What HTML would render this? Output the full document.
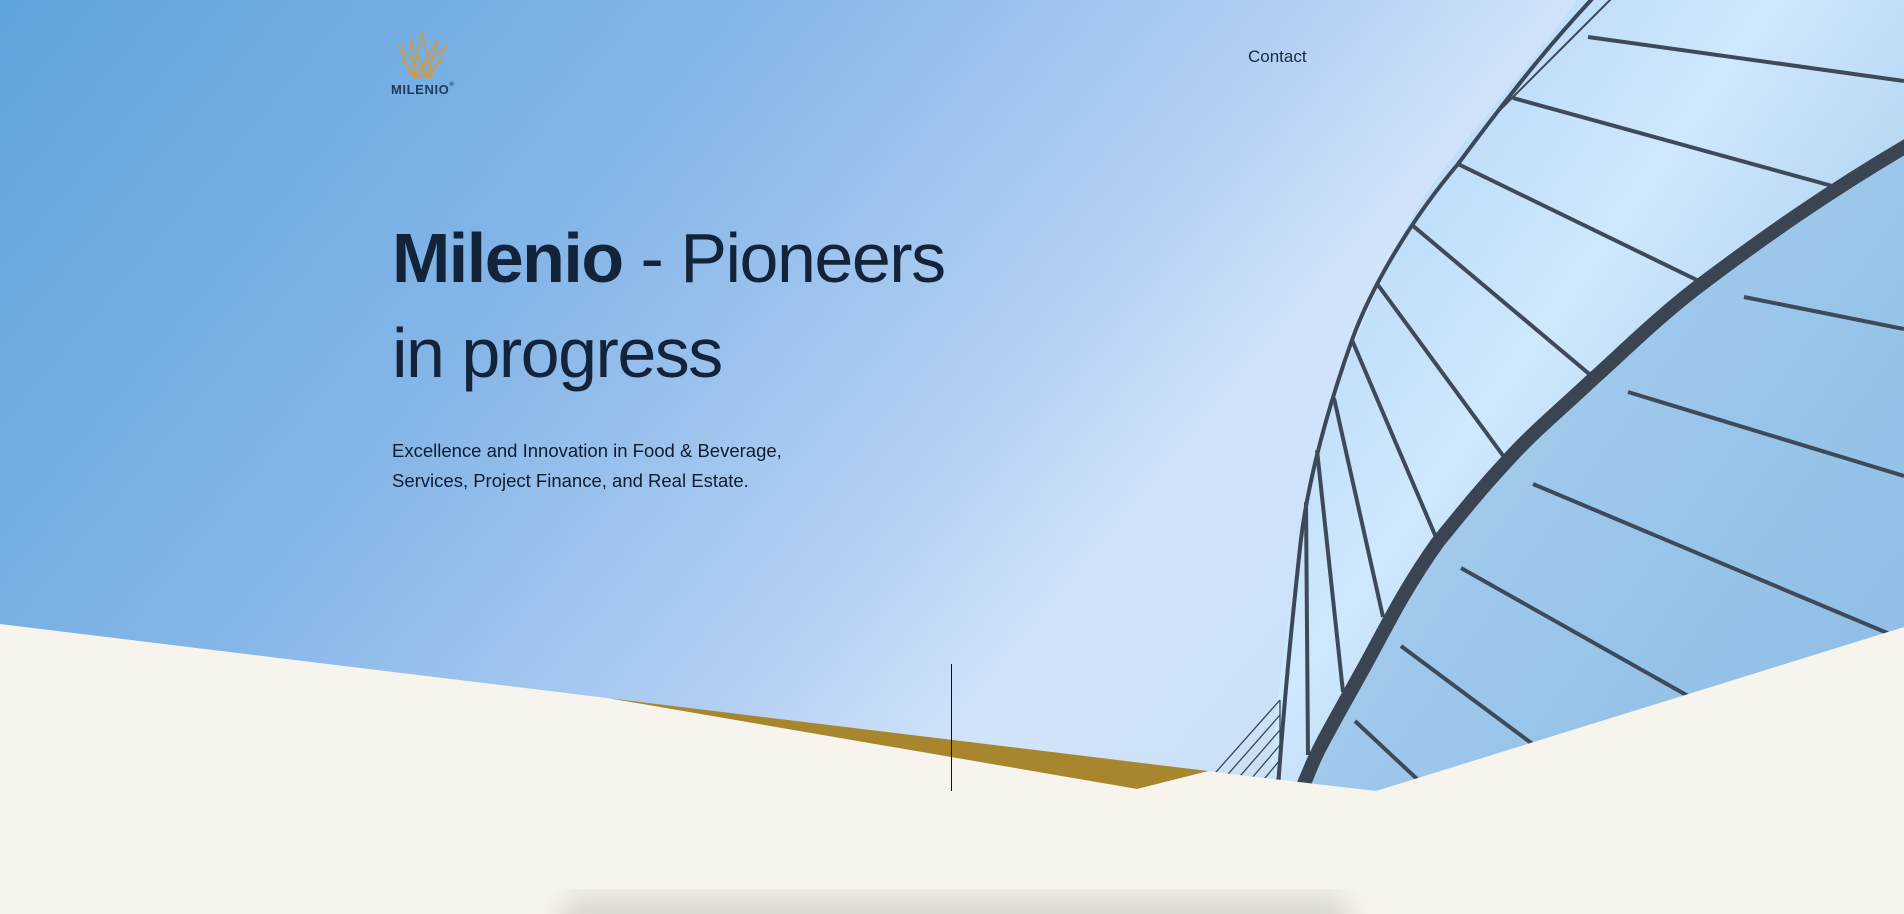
<!DOCTYPE html>
<html><head><meta charset="utf-8"><style>
html,body{margin:0;padding:0;width:1904px;height:914px;overflow:hidden}
body{position:relative;background:#f7f3ed;font-family:"Liberation Sans",sans-serif}
svg{position:absolute;left:0;top:0}
.t{position:absolute;color:#13243a;white-space:nowrap}
</style></head><body>
<svg width="1904" height="914" viewBox="0 0 1904 914">
<defs>
<linearGradient id="sky" x1="0" y1="0" x2="1" y2="0.4">
<stop offset="0" stop-color="#5ea4dc"/>
<stop offset="0.35" stop-color="#86b6e8"/>
<stop offset="0.6" stop-color="#b4d0f4"/>
<stop offset="0.72" stop-color="#d2e4fa"/>
<stop offset="1" stop-color="#c4dcf4"/>
</linearGradient>
<linearGradient id="glass" x1="0" y1="0" x2="1" y2="1">
<stop offset="0" stop-color="#a8d0f6"/>
<stop offset="0.4" stop-color="#cfe8fc"/>
<stop offset="1" stop-color="#80b2e0"/>
</linearGradient>
<linearGradient id="sh" x1="0" y1="0" x2="0" y2="1">
<stop offset="0" stop-color="#e6e2dc" stop-opacity="0"/>
<stop offset="1" stop-color="#dcd8d2"/>
</linearGradient>
<filter id="bl"><feGaussianBlur stdDeviation="12"/></filter>
</defs>
<rect width="1904" height="914" fill="url(#sky)"/>
<path d="M1577 0 L1904 0 L1904 914 L1259 914 C1270 760 1282 640 1300 548 C1315 450 1345 350 1409 222 C1450 150 1513 90 1577 0Z" fill="url(#glass)"/>
<path d="M1904 147 C1800 200 1650 320 1507 461 C1420 560 1330 720 1265 900 L1904 900Z" fill="#8fbde6" opacity="0.7"/>
<g stroke="#3a4656" stroke-width="1.3">
<line x1="1280" y1="700" x2="1120" y2="880"/><line x1="1280" y1="715" x2="1135" y2="880"/>
<line x1="1280" y1="730" x2="1150" y2="880"/><line x1="1280" y1="745" x2="1165" y2="880"/>
<line x1="1280" y1="760" x2="1180" y2="880"/><line x1="1280" y1="775" x2="1195" y2="880"/>
<line x1="1280" y1="790" x2="1210" y2="880"/><line x1="1278" y1="805" x2="1225" y2="880"/>
<line x1="1276" y1="820" x2="1240" y2="880"/><line x1="1280" y1="700" x2="1280" y2="880"/>
</g>
<path d="M1620 -30 C1560 30 1513 90 1458 164 C1409 222 1370 290 1352 340 C1320 430 1305 500 1300 548 C1290 640 1282 720 1270 900" fill="none" stroke="#3c4858" stroke-width="4"/>
<path d="M1640 -30 C1580 30 1530 80 1490 120" fill="none" stroke="#3c4858" stroke-width="2"/>
<g stroke="#3e4a5a" stroke-width="4" fill="none">
<line x1="1588" y1="37" x2="1904" y2="81"/>
<line x1="1513" y1="98" x2="1836" y2="187"/>
<line x1="1458" y1="164" x2="1703" y2="283"/>
<line x1="1412" y1="225" x2="1594" y2="378"/>
<line x1="1378" y1="285" x2="1507" y2="461"/>
<line x1="1352" y1="340" x2="1438" y2="542"/>
<line x1="1334" y1="398" x2="1383" y2="617"/>
<line x1="1317" y1="450" x2="1343" y2="692"/>
<line x1="1306" y1="502" x2="1308" y2="755"/>
<line x1="1744" y1="297" x2="1904" y2="329"/>
<line x1="1628" y1="392" x2="1904" y2="476"/>
<line x1="1533" y1="484" x2="1904" y2="640"/>
<line x1="1461" y1="568" x2="1784" y2="750"/>
<line x1="1401" y1="646" x2="1617" y2="807"/>
<line x1="1355" y1="721" x2="1493" y2="850"/>
<line x1="1317" y1="787" x2="1401" y2="882"/>
</g>
<path d="M1920 138 C1830 190 1760 240 1703 283 C1660 315 1620 355 1594 378 C1560 410 1530 435 1507 461 C1480 490 1460 515 1438 542 C1400 595 1380 640 1357 680 C1335 720 1320 745 1311 767 C1295 805 1280 840 1265 880" fill="none" stroke="#3a4452" stroke-width="14"/>
<polygon points="607,698 1208,771 1137,789" fill="#a8862e"/>
<polygon points="0,624 607,698 1137,789 1210,771 1222,773 1376,791 1904,627 1904,914 0,914" fill="#f7f3ed"/>
<rect x="560" y="895" width="790" height="60" rx="20" fill="#dcd8d2" filter="url(#bl)"/>
<line x1="951.5" y1="664" x2="951.5" y2="791" stroke="#111" stroke-width="1"/>
<g stroke="#d39a45" stroke-width="1.4" fill="none">
<path d="M398 45 L412 77 L447 45"/><path d="M398 45 L430 77 L447 45"/>
<path d="M410 40 L415 77 L437 40"/><path d="M410 40 L428 77 L437 40"/>
<path d="M422 32 L412 77"/><path d="M422 32 L432 77"/>
<path d="M412 77 L432 77"/><path d="M402 60 L420 77 L443 60"/>
</g>
</svg>
<div class="t" style="left:391px;top:82px;font-size:13px;font-weight:bold;color:#1e3a5c;letter-spacing:0.6px">MILENIO<span style="font-size:6px;vertical-align:top">®</span></div>
<div class="t" style="left:1248px;top:47px;font-size:17px;color:#1a2a40">Contact</div>
<div class="t" style="left:392px;top:211px;font-size:70px;line-height:95px;letter-spacing:-1.5px;color:#13243a"><b>Milenio</b> - Pioneers<br>in progress</div>
<div class="t" style="left:392px;top:436px;font-size:18.5px;line-height:30px;color:#0f1d2e">Excellence and Innovation in Food &amp; Beverage,<br>Services, Project Finance, and Real Estate.</div>
</body></html>
